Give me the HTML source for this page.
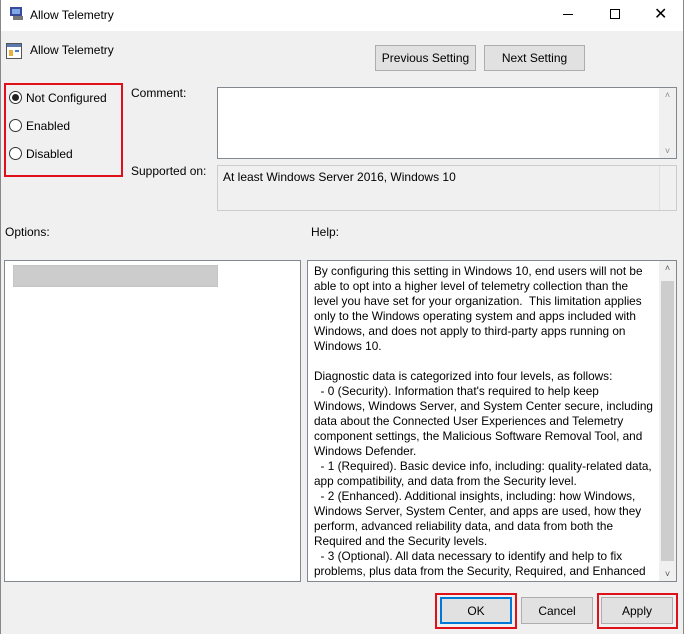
<!DOCTYPE html>
<html><head><style>
*{margin:0;padding:0;box-sizing:border-box}
body{width:684px;height:634px;background:#f0f0f0;font-family:"Liberation Sans",sans-serif;font-size:12px;color:#000;position:relative;overflow:hidden}
.a{position:absolute}
.box{position:absolute;background:#fff;border:1px solid #828790}
.btn{position:absolute;background:#e1e1e1;border:1px solid #adadad;text-align:center;font-size:12px}
.sb{position:absolute;background:#f0f0f0;right:0;top:0;bottom:0;width:17px}
.rad{position:absolute;width:13px;height:13px;border:1px solid #333;border-radius:50%;background:#fff}
.red{position:absolute;border:2px solid #e0101a}
</style></head><body>
<div class="a" style="left:0;top:0;width:684px;height:31px;background:#fff"></div>
<div class="a" style="left:0;top:0;width:1px;height:634px;background:#888"></div>
<div class="a" style="right:0;top:0;width:1px;height:634px;background:#888"></div>
<svg class="a" style="left:9px;top:6px" width="16" height="16"><rect x="1" y="1" width="12" height="9" fill="#3a4a9a"/><rect x="3" y="3" width="8" height="5" fill="#7fa8e8"/><rect x="4" y="10" width="10" height="4" fill="#777"/></svg>
<div class="a" style="left:30px;top:8px;font-size:12px">Allow Telemetry</div>
<div class="a" style="left:563px;top:14px;width:10px;height:1px;background:#000"></div>
<div class="a" style="left:610px;top:9px;width:10px;height:10px;border:1px solid #000"></div>
<div class="a" style="left:654px;top:4px;font-size:16px">✕</div>
<svg class="a" style="left:6px;top:43px" width="16" height="16"><rect x="0.5" y="0.5" width="15" height="15" fill="#fff" stroke="#555"/><rect x="1" y="1" width="14" height="3" fill="#5a7ab0"/><rect x="3" y="7" width="4" height="6" fill="#e8b040"/><rect x="9" y="7" width="4" height="2" fill="#4a7ad0"/></svg>
<div class="a" style="left:30px;top:43px">Allow Telemetry</div>
<div class="btn" style="left:375px;top:45px;width:101px;height:26px;line-height:25px">Previous Setting</div>
<div class="btn" style="left:484px;top:45px;width:101px;height:26px;line-height:25px">Next Setting</div>
<div class="red" style="left:4px;top:83px;width:119px;height:94px"></div>
<div class="rad" style="left:9px;top:91px"><div style="position:absolute;left:2px;top:2px;width:7px;height:7px;border-radius:50%;background:#222"></div></div>
<div class="a" style="left:26px;top:91px">Not Configured</div>
<div class="rad" style="left:9px;top:119px"></div>
<div class="a" style="left:26px;top:119px">Enabled</div>
<div class="rad" style="left:9px;top:147px"></div>
<div class="a" style="left:26px;top:147px">Disabled</div>
<div class="a" style="left:131px;top:86px">Comment:</div>
<div class="a" style="left:131px;top:164px">Supported on:</div>
<div class="box" style="left:217px;top:87px;width:460px;height:72px"><div class="sb"><div style="text-align:center;font-size:9px;color:#888;margin-top:2px">˄</div><div style="position:absolute;bottom:2px;width:17px;text-align:center;font-size:9px;color:#888">˅</div></div></div>
<div class="box" style="left:217px;top:165px;width:460px;height:46px;background:#f0f0f0;border-color:#ccc"><div style="position:absolute;left:5px;top:4px">At least Windows Server 2016, Windows 10</div><div class="sb" style="border-left:1px solid #e0e0e0"></div></div>
<div class="a" style="left:5px;top:225px">Options:</div>
<div class="a" style="left:311px;top:225px">Help:</div>
<div class="box" style="left:4px;top:260px;width:297px;height:322px"><div style="position:absolute;left:8px;top:4px;width:205px;height:22px;background:#ccc;border:1px solid #c4c4c4"></div></div>
<div class="box" style="left:307px;top:260px;width:370px;height:322px;overflow:hidden">
<div style="position:absolute;left:6px;top:3px;width:345px;line-height:15px;font-size:11.8px;white-space:pre">By configuring this setting in Windows 10, end users will not be
able to opt into a higher level of telemetry collection than the
level you have set for your organization.  This limitation applies
only to the Windows operating system and apps included with
Windows, and does not apply to third-party apps running on
Windows 10.

Diagnostic data is categorized into four levels, as follows:
  - 0 (Security). Information that's required to help keep
Windows, Windows Server, and System Center secure, including
data about the Connected User Experiences and Telemetry
component settings, the Malicious Software Removal Tool, and
Windows Defender.
  - 1 (Required). Basic device info, including: quality-related data,
app compatibility, and data from the Security level.
  - 2 (Enhanced). Additional insights, including: how Windows,
Windows Server, System Center, and apps are used, how they
perform, advanced reliability data, and data from both the
Required and the Security levels.
  - 3 (Optional). All data necessary to identify and help to fix
problems, plus data from the Security, Required, and Enhanced
levels.</div>
<div class="sb"><div style="text-align:center;font-size:9px;color:#555;margin-top:2px">˄</div><div style="position:absolute;left:2px;right:2px;top:20px;height:280px;background:#cdcdcd"></div><div style="position:absolute;bottom:2px;width:17px;text-align:center;font-size:9px;color:#555">˅</div></div>
</div>
<div class="red" style="left:435px;top:593px;width:82px;height:36px"></div>
<div class="btn" style="left:440px;top:597px;width:72px;height:27px;line-height:25px;border:2px solid #0078d7">OK</div>
<div class="btn" style="left:521px;top:597px;width:72px;height:27px;line-height:26px">Cancel</div>
<div class="red" style="left:597px;top:593px;width:81px;height:36px"></div>
<div class="btn" style="left:601px;top:597px;width:72px;height:27px;line-height:26px">Apply</div>
</body></html>
